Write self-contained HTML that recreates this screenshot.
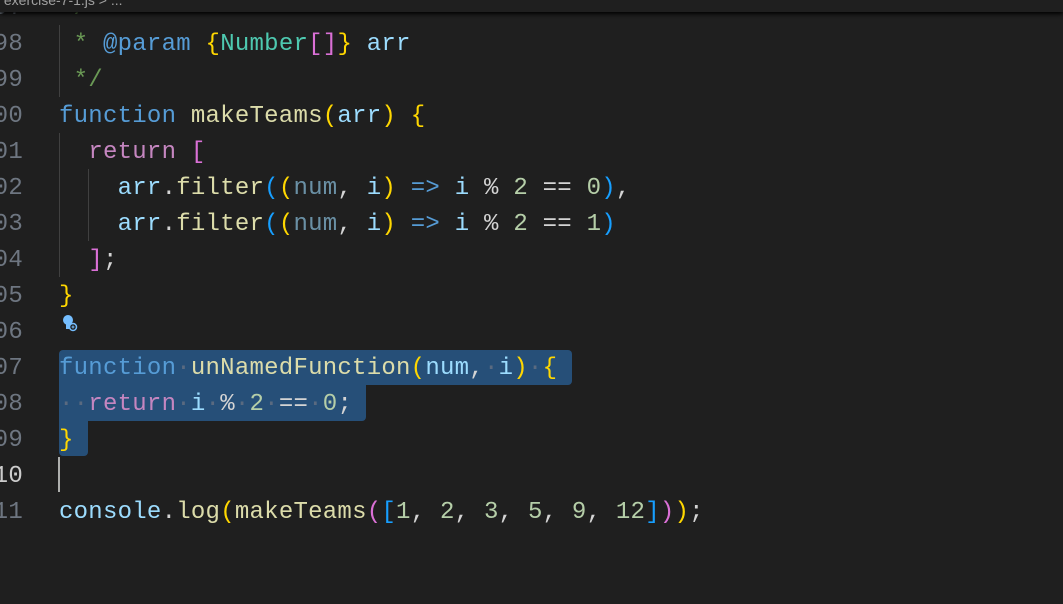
<!DOCTYPE html>
<html><head><style>
body{margin:0;width:1063px;height:604px;background:#1f1f1f;overflow:hidden;position:relative;font-family:"Liberation Mono",monospace;font-size:24px;letter-spacing:0.25px}
.bar{position:absolute;left:0;top:0;width:1063px;height:12px;background:#1f1f1f;box-shadow:0 2px 4px #000;z-index:5;color:#a0a0a0;font-family:"Liberation Sans",sans-serif;font-size:14px;line-height:0px;white-space:nowrap;overflow:hidden;letter-spacing:0}
.ln{position:absolute;right:1040px;width:60px;text-align:right;color:#6e7681;line-height:36px;height:36px;white-space:pre;margin-top:2px}
.ln.c{color:#cccccc}
.code{position:absolute;left:59px;line-height:36px;height:36px;white-space:pre;color:#d4d4d4;margin-top:2px}
.sel{position:absolute;background:#264f78;}
.k{color:#569cd6}.f{color:#dcdcaa}.p{color:#9cdcfe}.pd{color:#9cdcfe;opacity:.6}.r{color:#c586c0}.n{color:#b5cea8}.y{color:#ffd700}.m{color:#da70d6}.b{color:#179fff}.g{color:#6a9955}.d{color:#5a6a80}
.guide{position:absolute;width:1px;background:#404040}
</style></head><body>
<div class="bar">&nbsp;exercise-7-1.js &gt; ...</div>
<div class="ln" style="top:-11px">197</div>
<div class="code g" style="top:-11px"> /</div>
<div class="ln" style="top:25px">198</div><div class="code" style="top:25px"><span class="g"> * </span><span class="k">@param</span> <span class="y">{</span><span style="color:#4ec9b0">Number</span><span class="m">[]</span><span class="y">}</span> <span class="p">arr</span></div>
<div class="ln" style="top:61px">199</div><div class="code g" style="top:61px"> */</div>
<div class="ln" style="top:97px">200</div><div class="code" style="top:97px"><span class="k">function</span> <span class="f">makeTeams</span><span class="y">(</span><span class="p">arr</span><span class="y">)</span> <span class="y">{</span></div>
<div class="ln" style="top:133px">201</div><div class="code" style="top:133px">  <span class="r">return</span> <span class="m">[</span></div>
<div class="ln" style="top:169px">202</div><div class="code" style="top:169px">    <span class="p">arr</span>.<span class="f">filter</span><span class="b">(</span><span class="y">(</span><span class="pd">num</span>, <span class="p">i</span><span class="y">)</span> <span class="k">=&gt;</span> <span class="p">i</span> % <span class="n">2</span> == <span class="n">0</span><span class="b">)</span>,</div>
<div class="ln" style="top:205px">203</div><div class="code" style="top:205px">    <span class="p">arr</span>.<span class="f">filter</span><span class="b">(</span><span class="y">(</span><span class="pd">num</span>, <span class="p">i</span><span class="y">)</span> <span class="k">=&gt;</span> <span class="p">i</span> % <span class="n">2</span> == <span class="n">1</span><span class="b">)</span></div>
<div class="ln" style="top:241px">204</div><div class="code" style="top:241px">  <span class="m">]</span>;</div>
<div class="ln" style="top:277px">205</div><div class="code" style="top:277px"><span class="y">}</span></div>
<div class="ln" style="top:313px">206</div>
<svg style="position:absolute;left:61px;top:314px" width="18" height="18" viewBox="0 0 18 18"><circle cx="7" cy="6" r="5" fill="#75beff"/><rect x="5" y="10" width="4" height="5" fill="#75beff"/><circle cx="12" cy="13" r="3.5" fill="#1f1f1f" stroke="#75beff" stroke-width="1.5"/><path d="M12 11.5v3M10.5 13h3" stroke="#75beff" stroke-width="1"/></svg>
<div class="sel" style="left:59px;top:350px;width:513px;height:35px;border-radius:4px 4px 4px 0"></div>
<div class="sel" style="left:59px;top:385px;width:307px;height:36px;border-radius:0 0 4px 0"></div>
<div class="sel" style="left:59px;top:421px;width:29px;height:35px;border-radius:0 0 4px 4px"></div>
<div class="ln" style="top:349px">207</div><div class="code" style="top:349px"><span class="k">function</span><span class="d">·</span><span class="f">unNamedFunction</span><span class="y">(</span><span class="p">num</span>,<span class="d">·</span><span class="p">i</span><span class="y">)</span><span class="d">·</span><span class="y">{</span></div>
<div class="ln" style="top:385px">208</div><div class="code" style="top:385px"><span class="d">··</span><span class="r">return</span><span class="d">·</span><span class="p">i</span><span class="d">·</span>%<span class="d">·</span><span class="n">2</span><span class="d">·</span>==<span class="d">·</span><span class="n">0</span>;</div>
<div class="ln" style="top:421px">209</div><div class="code" style="top:421px"><span class="y">}</span></div>
<div class="ln c" style="top:457px">210</div>
<div style="position:absolute;left:58px;top:457px;width:2px;height:35px;background:#aeafad"></div>
<div class="ln" style="top:493px">211</div><div class="code" style="top:493px"><span class="p">console</span>.<span class="f">log</span><span class="y">(</span><span class="f">makeTeams</span><span class="m">(</span><span class="b">[</span><span class="n">1</span>, <span class="n">2</span>, <span class="n">3</span>, <span class="n">5</span>, <span class="n">9</span>, <span class="n">12</span><span class="b">]</span><span class="m">)</span><span class="y">)</span>;</div>
<div class="guide" style="left:59px;top:25px;height:72px"></div>
<div class="guide" style="left:59px;top:133px;height:144px"></div>
<div class="guide" style="left:88px;top:169px;height:72px"></div>
</body></html>
